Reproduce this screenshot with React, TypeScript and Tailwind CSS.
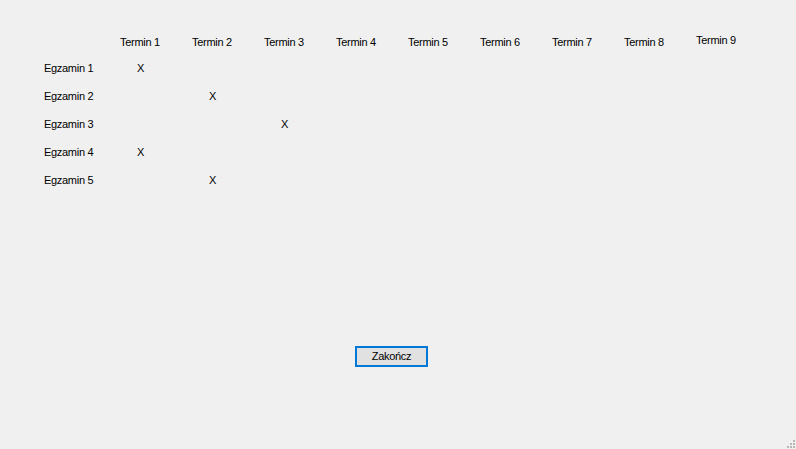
import React from "react";

const terms = ["Termin 1", "Termin 2", "Termin 3", "Termin 4", "Termin 5", "Termin 6", "Termin 7", "Termin 8", "Termin 9"];

// which term column holds the X for each exam
const exams = [
  { name: "Egzamin 1", term: 0 },
  { name: "Egzamin 2", term: 1 },
  { name: "Egzamin 3", term: 2 },
  { name: "Egzamin 4", term: 0 },
  { name: "Egzamin 5", term: 1 },
];

function SizeGrip() {
  const dots = [
    [9, 3],
    [6, 6],
    [9, 6],
    [3, 9],
    [6, 9],
    [9, 9],
  ];
  return (
    <svg width="12" height="12" className="absolute right-0 bottom-0" viewBox="0 0 12 12">
      {dots.map(([x, y]) => (
        <rect key={`${x}-${y}`} x={x} y={y} width="2" height="2" fill="#b8b8b8" />
      ))}
    </svg>
  );
}

export default function App() {
  return (
    <div
      className="relative w-[796px] h-[449px] overflow-hidden bg-[#f0f0f0] text-[11px] leading-[13px] tracking-[-0.3px] text-black"
      style={{ fontFamily: '"Liberation Sans", Arial, sans-serif' }}
    >
      <div className="flex pl-[120px] pt-[36px]">
        {terms.map((t, i) => (
          <div key={t} className={`w-[72px] h-[13px] ${i === 8 ? "-mt-[2px]" : ""}`}>
            {t}
          </div>
        ))}
      </div>

      <div className="mt-[13px]">
        {exams.map((e) => (
          <div key={e.name} className="flex h-[28px]">
            <div className="w-[120px] pl-[44px]">{e.name}</div>
            {terms.map((t, i) => (
              <div key={t} className="w-[72px] pl-[17px]">
                {i === e.term ? "X" : ""}
              </div>
            ))}
          </div>
        ))}
      </div>

      <div className="ml-[355px] mt-[144px]">
        <button className="w-[73px] h-[21px] border-2 border-[#0078d7] bg-[#e1e1e1] text-[11px] leading-[13px] tracking-[-0.3px] text-black flex items-center justify-center">
          Zakończ
        </button>
      </div>

      <SizeGrip />
    </div>
  );
}
